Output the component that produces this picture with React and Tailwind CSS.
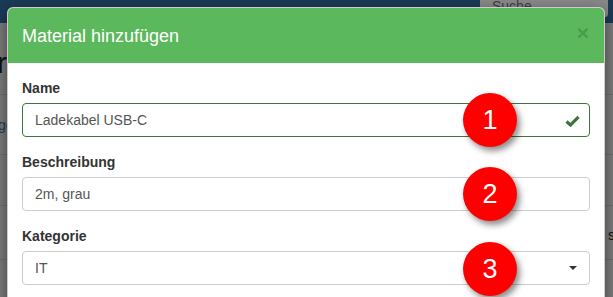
import React from "react";

function Badge({ n, top }) {
  return (
    <div
      className={`absolute left-[463px] w-[54px] h-[54px] rounded-full bg-[#ff0000] text-white flex items-center justify-center text-[27px] leading-none shadow-[3px_4px_6px_rgba(0,0,0,0.45)] ${top}`}
    >
      {n}
    </div>
  );
}

export default function App() {
  return (
    <div className="relative w-[613px] h-[297px] overflow-hidden bg-[#7d7d7d] font-['Liberation_Sans',Arial,sans-serif]">
      {/* dimmed page behind */}
      <div className="flex flex-col">
        <div className="h-[23px] bg-[#1b3a57] flex justify-end items-start">
          <div className="w-[128px] h-[17px] mr-[5px] bg-[#898989] rounded-b-[3px] overflow-hidden flex items-end pl-[12px]">
            <span className="text-[14px] leading-[14px] text-[#3f3f3f] mb-[4px]">Suche...</span>
          </div>
        </div>
        <div className="h-[72px] border-b border-[#6f6f6f] flex items-center">
          <span className="text-[30px] leading-none text-[#111] -ml-[3px] mt-[8px]">r</span>
        </div>
        <div className="h-[60px] border-b border-[#6f6f6f] flex items-center">
          <span className="text-[14px] text-[#1d3f5e] -ml-[2px] mt-[2px]">ge</span>
        </div>
        <div className="h-[51px] border-b border-[#6f6f6f]"></div>
        <div className="h-[54px] border-b border-[#6f6f6f] flex items-center justify-end">
          <span className="text-[14px] text-[#111] -mr-[6px] mt-[6px]">st</span>
        </div>
      </div>

      {/* modal */}
      <div className="absolute left-[7px] top-[7px] w-[598px] h-[320px] bg-white rounded-[6px] border border-[rgba(0,0,0,0.2)] shadow-[0_5px_15px_rgba(0,0,0,0.5)] overflow-hidden">
        <div className="h-[56px] bg-[#5cb85c] flex items-center justify-between pl-[14px] pr-[15px] -mt-px">
          <span className="text-[18px] leading-[26px] text-white mt-[2px]">Material hinzufügen</span>
          <span className="text-[21px] font-bold leading-none text-[#4c9a4c] -mt-[6px]">×</span>
        </div>
        <div className="px-[14px] pt-[15px] flex flex-col">
          <label className="text-[14px] font-bold leading-[20px] text-[#333] mb-[5px]">Name</label>
          <div className="h-[34px] border border-[#3c763d] rounded-[4px] flex items-center justify-between pl-[12px] pr-[9px] mb-[15px]">
            <span className="text-[14px] text-[#555]">Ladekabel USB-C</span>
            <svg width="15" height="12" viewBox="0 0 15 12" className="mt-[1px]">
              <path d="M1.5 6.5 L5.5 10 L13.5 1.8" fill="none" stroke="#3c763d" strokeWidth="3.2" />
            </svg>
          </div>
          <label className="text-[14px] font-bold leading-[20px] text-[#333] mb-[5px]">Beschreibung</label>
          <div className="h-[34px] border border-[#ccc] rounded-[4px] flex items-center pl-[12px] mb-[15px]">
            <span className="text-[14px] text-[#555]">2m, grau</span>
          </div>
          <label className="text-[14px] font-bold leading-[20px] text-[#333] mb-[5px]">Kategorie</label>
          <div className="h-[34px] border border-[#ccc] rounded-[4px] flex items-center justify-between pl-[12px] pr-[12px]">
            <span className="text-[14px] text-[#555]">IT</span>
            <svg width="8" height="4" viewBox="0 0 8 4">
              <path d="M0 0 L8 0 L4 4 Z" fill="#333" />
            </svg>
          </div>
        </div>
      </div>

      <Badge n="1" top="top-[93px]" />
      <Badge n="2" top="top-[167px]" />
      <Badge n="3" top="top-[242px]" />
    </div>
  );
}
